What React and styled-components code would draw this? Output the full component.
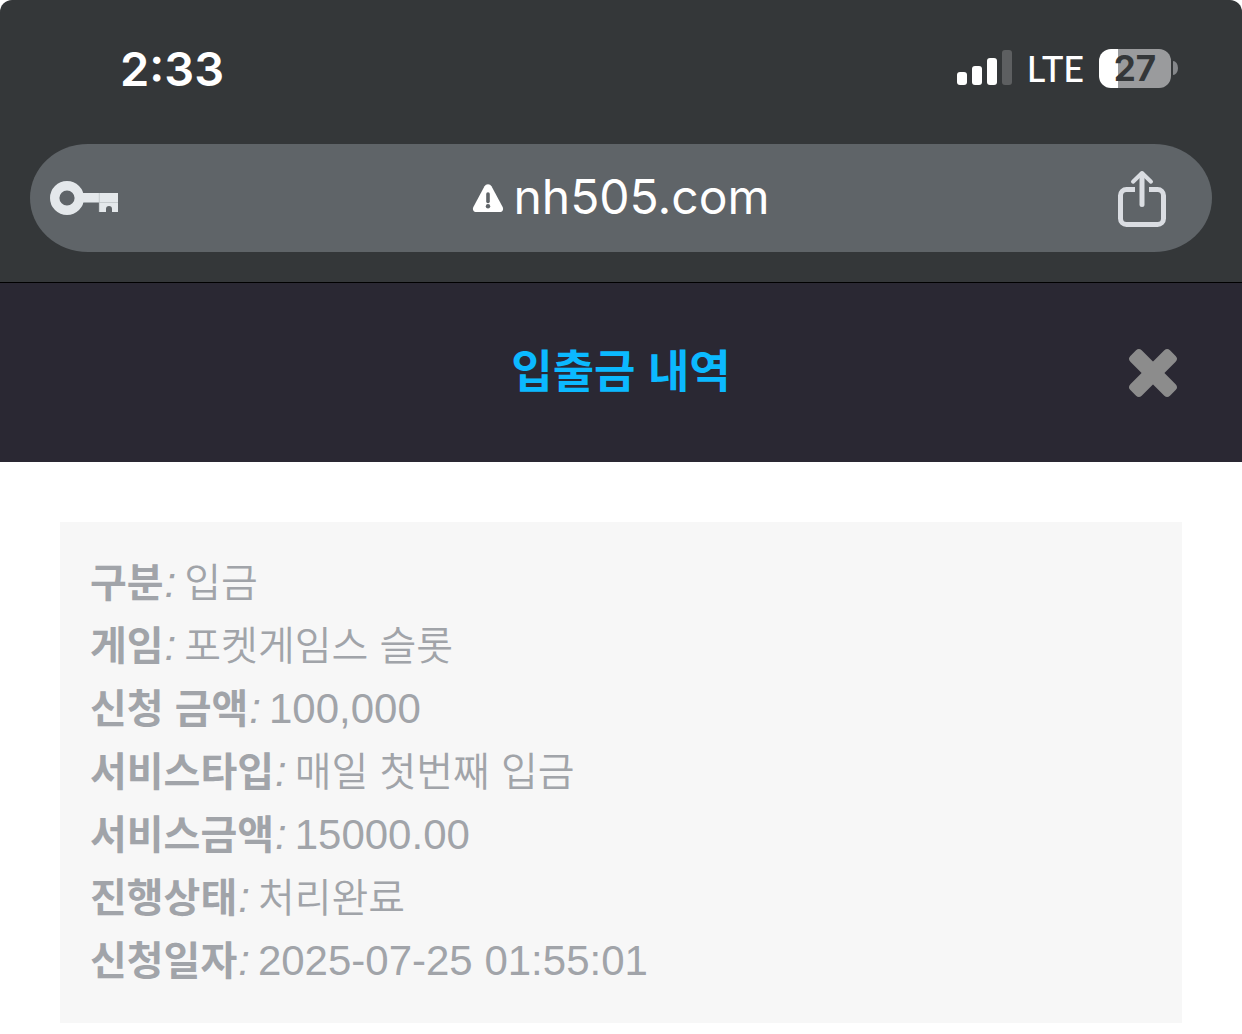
import styled, { createGlobalStyle } from "styled-components";

const GlobalStyle = createGlobalStyle`
  * {
    box-sizing: border-box;
  }

  body {
    margin: 0;
    background: #fff;
  }

  button {
    display: flex;
    align-items: center;
    padding: 0;
    border: none;
    background: transparent;
    color: inherit;
    font: inherit;
    cursor: pointer;
  }

  svg {
    display: block;
  }
`;

const Page = styled.div`
  width: 100%;
  font-family: "Liberation Sans", "Noto Sans CJK KR", sans-serif;
`;

const BrowserChrome = styled.div`
  padding-bottom: 30px;
  border-bottom: 1px solid #000;
  border-radius: 12px 12px 0 0;
  background: #343739;
  color: #fff;
  font-family: Inter, sans-serif;
`;

const StatusBar = styled.div`
  display: flex;
  align-items: center;
  justify-content: space-between;
  height: 144px;
  padding: 0 64px 8px 120px;
`;

const Clock = styled.time`
  font-size: 47px;
  font-weight: 600;
`;

const StatusIcons = styled.div`
  display: flex;
  align-items: center;
  gap: 15px;
`;

const Network = styled.span`
  font-family: Lato, sans-serif;
  font-size: 36px;
  font-weight: 500;
  line-height: 40px;
`;

const Battery = styled.div`
  display: flex;
  align-items: center;
  gap: 2px;
`;

const BatteryBody = styled.div`
  display: flex;
  align-items: center;
  justify-content: center;
  width: 72px;
  height: 39px;
  border-radius: 12px;
  background: linear-gradient(
    to right,
    #fff ${(props) => props.$level}%,
    #9a9b9d ${(props) => props.$level}%
  );
  color: #343739;
  font-size: 35px;
  font-weight: 700;
  line-height: 39px;
`;

const BatteryCap = styled.div`
  width: 5px;
  height: 14px;
  border-radius: 0 5px 5px 0 / 0 7px 7px 0;
  background: #85878a;
`;

const AddressBar = styled.div`
  display: grid;
  grid-template-columns: 1fr auto 1fr;
  align-items: center;
  height: 108px;
  margin: 0 30px;
  padding: 0 44px 0 20px;
  border-radius: 58px / 54px;
  background: #5f6468;
`;

const Address = styled.button`
  && {
    gap: 9px;
    margin-left: 24px;
    font-size: 48px;
    font-weight: 400;
    line-height: 56px;
  }

  span {
    padding-bottom: 2px;
  }
`;

const ShareButton = styled.button`
  justify-self: end;
`;

const TitleBar = styled.header`
  display: grid;
  grid-template-columns: 1fr auto 1fr;
  align-items: center;
  height: 179px;
  padding: 0 64px;
  background: #2a2833;
`;

const Title = styled.h1`
  grid-column: 2;
  margin: 0;
  color: #0bb9ff;
  font-size: 45px;
  font-weight: 700;
  line-height: 64px;
`;

const CloseButton = styled.button`
  justify-self: end;
`;

const Content = styled.main`
  padding: 60px;
`;

const Record = styled.dl`
  margin: 0;
  padding: 29px 30px 31px;
  background: #f7f7f7;
  color: #a1a4a9;
`;

const RecordRow = styled.div`
  display: flex;
  align-items: baseline;
  height: 63px;
  line-height: 63px;
`;

const Label = styled.dt`
  font-size: 40px;
  font-weight: 700;
`;

const Colon = styled.i`
  margin: 0 8px 0 1px;
  font-size: 42px;
  font-weight: 400;
`;

const Value = styled.dd`
  margin: 0;
  font-size: ${(props) => (props.$numeric ? "42px" : "40px")};
  font-weight: ${(props) => (props.$numeric ? 400 : 350)};
`;

const SignalIcon = () => (
  <svg width="55" height="36" viewBox="0 0 55 36" aria-hidden="true">
    <rect x="0" y="22" width="10" height="13" rx="3" fill="#fff" />
    <rect x="15" y="16" width="10" height="19" rx="3" fill="#fff" />
    <rect x="30" y="8" width="10" height="27" rx="3" fill="#fff" />
    <rect x="45" y="0" width="10" height="35" rx="3" fill="#5d5f61" />
  </svg>
);

const KeyIcon = () => (
  <svg width="68" height="34" viewBox="0 0 68 34" aria-hidden="true">
    <circle cx="17" cy="17" r="12.3" fill="none" stroke="#e4e8eb" strokeWidth="9.4" />
    <path
      d="M33 12h35v19h-6v-3a3 3 0 0 0-6 0v3h-7V21.500H33z"
      fill="#e4e8eb"
    />
    <path d="M49.300 12v19M49 21.500h19" stroke="#b9bec1" strokeWidth="0.700" />
  </svg>
);

const WarningIcon = () => (
  <svg width="32" height="29" viewBox="0 0 32 29" aria-hidden="true">
    <path
      d="M12.500 2.200a4 4 0 0 1 7 0l11 20.500c1.500 2.900 0 5.300-3 5.300h-23c-3 0-4.500-2.400-3-5.300z"
      fill="#fff"
    />
    <path d="M16 10v7.500" stroke="#5f6468" strokeWidth="3.600" strokeLinecap="round" />
    <circle cx="16" cy="22.300" r="2.200" fill="#5f6468" />
  </svg>
);

const ShareIcon = () => (
  <svg
    width="52"
    height="60"
    viewBox="0 0 52 60"
    fill="none"
    stroke="#dadde2"
    strokeWidth="5"
    aria-hidden="true"
  >
    <path d="M19 21.500H10.500a6 6 0 0 0-6 6V50.500a6 6 0 0 0 6 6h31a6 6 0 0 0 6-6V27.500a6 6 0 0 0-6-6H33" />
    <path d="M26 36.500V6" strokeLinecap="round" />
    <path
      d="M17 13.700 26 5l9 8.700"
      strokeWidth="4"
      strokeLinecap="round"
      strokeLinejoin="round"
    />
  </svg>
);

const CloseIcon = () => (
  <svg width="50" height="50" viewBox="-25 -25 50 50" fill="#8c8c8c" aria-hidden="true">
    <rect x="-28" y="-8" width="56" height="16" rx="4" transform="rotate(45)" />
    <rect x="-28" y="-8" width="56" height="16" rx="4" transform="rotate(-45)" />
  </svg>
);

const details = [
  { label: "구분", value: "입금" },
  { label: "게임", value: "포켓게임스 슬롯" },
  { label: "신청 금액", value: "100,000", numeric: true },
  { label: "서비스타입", value: "매일 첫번째 입금" },
  { label: "서비스금액", value: "15000.00", numeric: true },
  { label: "진행상태", value: "처리완료" },
  { label: "신청일자", value: "2025-07-25 01:55:01", numeric: true },
];

export default function App() {
  return (
    <Page>
      <GlobalStyle />
      <BrowserChrome>
        <StatusBar>
          <Clock>2:33</Clock>
          <StatusIcons>
            <SignalIcon />
            <Network>LTE</Network>
            <Battery>
              <BatteryBody $level={27}>27</BatteryBody>
              <BatteryCap />
            </Battery>
          </StatusIcons>
        </StatusBar>

        <AddressBar>
          <button type="button" aria-label="Passwords">
            <KeyIcon />
          </button>
          <Address type="button">
            <WarningIcon />
            <span>nh505.com</span>
          </Address>
          <ShareButton type="button" aria-label="Share">
            <ShareIcon />
          </ShareButton>
        </AddressBar>
      </BrowserChrome>

      <TitleBar>
        <Title>입출금 내역</Title>
        <CloseButton type="button" aria-label="닫기">
          <CloseIcon />
        </CloseButton>
      </TitleBar>

      <Content>
        <Record>
          {details.map((item) => (
            <RecordRow key={item.label}>
              <Label>{item.label}</Label>
              <Colon>:</Colon>
              <Value $numeric={item.numeric}>{item.value}</Value>
            </RecordRow>
          ))}
        </Record>
      </Content>
    </Page>
  );
}
